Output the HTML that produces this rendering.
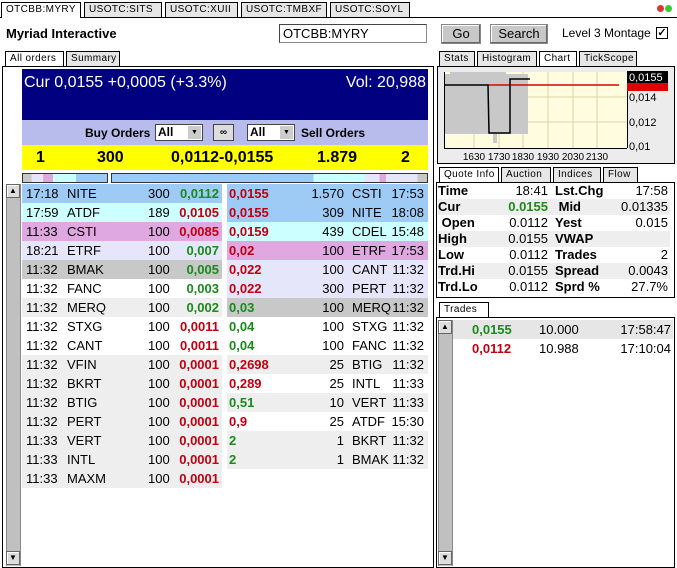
<!DOCTYPE html>
<html><head><meta charset="utf-8"><style>
*{box-sizing:border-box;margin:0;padding:0}
body{width:677px;height:566px;overflow:hidden;background:#fff;font-family:"Liberation Sans",Arial,sans-serif;font-size:13px;color:#000;position:relative}
.a{position:absolute}
.tab{position:absolute;height:15px;font-size:10px;letter-spacing:.4px;line-height:14px;padding-left:4px;border:1px solid #000;border-bottom:none;background:#e6e6e6;white-space:nowrap;overflow:hidden}
.tab.sel{background:#fff}
.btn{position:absolute;background:#c8c8c8;border:1px solid #888;box-shadow:inset -1px -1px #666,inset 1px 1px #fff;text-align:center;font-size:13px;line-height:18px}
.row{position:absolute;height:19px;line-height:19px;font-size:13px}
.row span{position:absolute;top:0}
.g{color:#1a8a1a;font-weight:bold}
.r{color:#c00010;font-weight:bold}
.sb{position:absolute;background:#c0c0c0;border-left:1px solid #888;border-right:1px solid #888}
.arr{position:absolute;width:14px;height:14px;background:#ddd;border:1px solid #666;box-shadow:inset 1px 1px #fff}
.q{position:absolute;left:438px;width:232px;height:16px;line-height:16px;font-size:13px}
.q span{position:absolute;top:0}
.q b{position:absolute;top:0}
</style></head><body>
<div class="a" style="left:0;top:17px;width:677px;height:1px;background:#000"></div>
<div class="tab sel" style="left:1px;top:2px;width:80px;height:16px">OTCBB:MYRY</div>
<div class="tab" style="left:84px;top:2px;width:78px">USOTC:SITS</div>
<div class="tab" style="left:165px;top:2px;width:73px">USOTC:XUII</div>
<div class="tab" style="left:241px;top:2px;width:86px">USOTC:TMBXF</div>
<div class="tab" style="left:330px;top:2px;width:80px">USOTC:SOYL</div>
<div class="a" style="left:657px;top:5px;width:7px;height:7px;border-radius:50%;background:#d33"></div>
<div class="a" style="left:665px;top:5px;width:7px;height:7px;border-radius:50%;background:#3c3"></div>
<div class="a" style="left:6px;top:26px;font-weight:bold;font-size:13px">Myriad Interactive</div>
<div class="a" style="left:279px;top:24px;width:148px;height:19px;border:1px solid #888;border-top-color:#444;border-left-color:#444;font-size:13px;line-height:17px;padding-left:3px">OTCBB:MYRY</div>
<div class="btn" style="left:441px;top:24px;width:40px;height:20px">Go</div>
<div class="btn" style="left:490px;top:24px;width:58px;height:20px">Search</div>
<div class="a" style="left:562px;top:26px;font-size:12px">Level 3 Montage</div>
<div class="a" style="left:656px;top:27px;width:12px;height:12px;border:1px solid #000;font-size:11px;line-height:10px;text-align:center;font-weight:bold">✓</div>
<div class="tab sel" style="left:5px;top:51px;width:59px;height:15px">All orders</div>
<div class="tab" style="left:66px;top:51px;width:54px">Summary</div>
<div class="a" style="left:2px;top:66px;width:432px;height:502px;border:1px solid #000"></div>
<div class="a" style="left:22px;top:69px;width:406px;height:51px;background:#000080;color:#fff;font-size:16px">
<div class="a" style="left:2px;top:5px">Cur 0,0155 +0,0005 (+3.3%)</div>
<div class="a" style="right:2px;top:5px">Vol: 20,988</div></div>
<div class="a" style="left:22px;top:120px;width:406px;height:25px;background:#b8bcec;font-weight:bold;font-size:12px">
<div class="a" style="left:63px;top:6px">Buy Orders</div>
<div class="a" style="left:133px;top:4px;width:48px;height:17px;background:#fff;border:1px solid #444;font-size:12px;padding-left:2px;line-height:15px">All<span style="position:absolute;right:1px;top:1px;width:13px;height:13px;background:#ccc;font-size:7px;text-align:center;line-height:13px">▼</span></div>
<div class="a" style="left:191px;top:4px;width:21px;height:17px;background:#ddd;border:1px solid #444;font-size:10px;text-align:center;line-height:15px">∞</div>
<div class="a" style="left:225px;top:4px;width:48px;height:17px;background:#fff;border:1px solid #444;font-size:12px;padding-left:2px;line-height:15px">All<span style="position:absolute;right:1px;top:1px;width:13px;height:13px;background:#ccc;font-size:7px;text-align:center;line-height:13px">▼</span></div>
<div class="a" style="left:279px;top:6px">Sell Orders</div></div>
<div class="a" style="left:22px;top:145px;width:406px;height:25px;background:#ffff00;font-weight:bold;font-size:16px;line-height:25px">
<span class="a" style="left:14px">1</span><span class="a" style="left:75px">300</span><span class="a" style="left:149px">0,0112-0,0155</span><span class="a" style="left:295px">1.879</span><span class="a" style="left:379px">2</span></div>
<div class="a" style="left:22px;top:173px;width:86px;height:10px;border:1px solid #333;background:linear-gradient(90deg,#c8c8c8 0 10%,#e6e6fa 10% 24%,#e0a8e0 24% 36%,#ccffff 36% 63%,#9ecbf5 63%)"></div>
<div class="a" style="left:111px;top:173px;width:317px;height:10px;border:1px solid #333;background:linear-gradient(90deg,#9ecbf5 0 64%,#ccffff 64% 80%,#e6e6fa 80% 85%,#e0a8e0 85% 87%,#e6e6fa 87% 97%,#c8c8c8 97%)"></div>
<div class="sb" style="left:6px;top:184px;width:15px;height:382px"></div>
<div class="arr" style="left:6px;top:184px;font-size:8px;text-align:center;line-height:12px">▲</div>
<div class="arr" style="left:6px;top:551px;font-size:8px;text-align:center;line-height:12px">▼</div>
<div id="rows"></div>
<div class="tab" style="left:439px;top:51px;width:36px">Stats</div>
<div class="tab" style="left:477px;top:51px;width:60px">Histogram</div>
<div class="tab sel" style="left:539px;top:51px;width:38px;height:15px">Chart</div>
<div class="tab" style="left:579px;top:51px;width:58px">TickScope</div>
<div class="a" style="left:437px;top:66px;width:238px;height:98px;border:1px solid #000;background:#ececec"></div>
<svg class="a" style="left:437px;top:66px" width="238" height="98">
<rect x="7" y="6" width="183" height="76" fill="#fffce0"/>
<g stroke="#d8d4a8" stroke-width="1">
<line x1="37" y1="6" x2="37" y2="82"/><line x1="62" y1="6" x2="62" y2="82"/><line x1="86" y1="6" x2="86" y2="82"/><line x1="111" y1="6" x2="111" y2="82"/><line x1="136" y1="6" x2="136" y2="82"/><line x1="160" y1="6" x2="160" y2="82"/>
<line x1="7" y1="31" x2="190" y2="31"/><line x1="7" y1="56" x2="190" y2="56"/></g>
<rect x="7" y="8" width="84" height="60" fill="#c8c8c8"/>
<rect x="13" y="6" width="56" height="4" fill="#c8c8c8"/>
<rect x="56" y="68" width="4" height="9" fill="#c8c8c8"/>
<line x1="50" y1="19" x2="182" y2="19" stroke="#e00000" stroke-width="1.5"/>
<polyline points="7,19 51,19 52,67 73,67 73,13 93,13" fill="none" stroke="#000" stroke-width="1.5"/>
<line x1="7.5" y1="6" x2="7.5" y2="82" stroke="#000"/><line x1="7" y1="82.5" x2="190" y2="82.5" stroke="#000"/><line x1="190.5" y1="6" x2="190.5" y2="82" stroke="#000"/>
<rect x="190" y="5" width="41" height="12" fill="#000"/><rect x="190" y="17" width="41" height="8" fill="#e00000"/>
<g font-family="Liberation Sans" font-size="11">
<text x="192" y="15" fill="#fff">0,0155</text>
<text x="192" y="35">0,014</text><text x="192" y="60">0,012</text><text x="192" y="84">0,01</text></g>
<g font-family="Liberation Sans" font-size="10" text-anchor="middle">
<text x="37" y="94">1630</text><text x="62" y="94">1730</text><text x="86" y="94">1830</text><text x="111" y="94">1930</text><text x="136" y="94">2030</text><text x="160" y="94">2130</text></g>
</svg>
<div class="tab sel" style="left:439px;top:167px;width:60px;height:15px">Quote Info</div>
<div class="tab" style="left:501px;top:167px;width:50px">Auction</div>
<div class="tab" style="left:553px;top:167px;width:48px">Indices</div>
<div class="tab" style="left:603px;top:167px;width:35px">Flow</div>
<div class="a" style="left:436px;top:182px;width:239px;height:116px;border:1px solid #000"></div>
<div id="quote"></div>
<div class="tab sel" style="left:439px;top:302px;width:50px;height:15px">Trades</div>
<div class="a" style="left:436px;top:317px;width:239px;height:251px;border:1px solid #000"></div>
<div class="sb" style="left:438px;top:320px;width:15px;height:246px"></div>
<div class="arr" style="left:438px;top:320px;font-size:8px;text-align:center;line-height:12px">▲</div>
<div class="arr" style="left:438px;top:551px;font-size:8px;text-align:center;line-height:12px">▼</div>
<div class="row" style="left:453px;top:320px;width:220px;background:#e6e6e6"><span class="g" style="left:19px">0,0155</span><span style="left:86px">10.000</span><span style="right:2px">17:58:47</span></div>
<div class="row" style="left:453px;top:339px;width:220px"><span class="r" style="left:19px">0,0112</span><span style="left:86px">10.988</span><span style="right:2px">17:10:04</span></div>
<script>
var B=[["17:18","NITE","300","0,0112","g","#9ecbf5"],["17:59","ATDF","189","0,0105","r","#ccffff"],["11:33","CSTI","100","0,0085","r","#e0a8e0"],["18:21","ETRF","100","0,007","g","#e6e6fa"],["11:32","BMAK","100","0,005","g","#c8c8c8"],["11:32","FANC","100","0,003","g","#fff"],["11:32","MERQ","100","0,002","g","#eee"],["11:32","STXG","100","0,0011","r","#fff"],["11:32","CANT","100","0,0011","r","#fff"],["11:32","VFIN","100","0,0001","r","#eee"],["11:32","BKRT","100","0,0001","r","#eee"],["11:32","BTIG","100","0,0001","r","#eee"],["11:32","PERT","100","0,0001","r","#eee"],["11:33","VERT","100","0,0001","r","#eee"],["11:33","INTL","100","0,0001","r","#eee"],["11:33","MAXM","100","0,0001","r","#eee"]];
var S=[["0,0155","r","1.570","CSTI","17:53","#9ecbf5"],["0,0155","r","309","NITE","18:08","#9ecbf5"],["0,0159","r","439","CDEL","15:48","#ccffff"],["0,02","r","100","ETRF","17:53","#e0a8e0"],["0,022","r","100","CANT","11:32","#e6e6fa"],["0,022","r","300","PERT","11:32","#e6e6fa"],["0,03","g","100","MERQ","11:32","#c8c8c8"],["0,04","g","100","STXG","11:32","#fff"],["0,04","g","100","FANC","11:32","#fff"],["0,2698","r","25","BTIG","11:32","#eee"],["0,289","r","25","INTL","11:33","#fff"],["0,51","g","10","VERT","11:33","#eee"],["0,9","r","25","ATDF","15:30","#fff"],["2","g","1","BKRT","11:32","#eee"],["2","g","1","BMAK","11:32","#eee"]];
var h="";
B.forEach(function(r,i){var y=184+i*19;h+='<div class="row" style="left:22px;top:'+y+'px;width:200px;background:'+r[5]+'"><span style="left:4px">'+r[0]+'</span><span style="left:45px">'+r[1]+'</span><span style="left:126px">'+r[2]+'</span><span class="'+r[4]+'" style="right:3px">'+r[3]+'</span></div>';});
S.forEach(function(r,i){var y=184+i*19;h+='<div class="row" style="left:227px;top:'+y+'px;width:201px;background:'+r[5]+'"><span class="'+r[1]+'" style="left:2px">'+r[0]+'</span><span style="right:84px">'+r[2]+'</span><span style="left:125px">'+r[3]+'</span><span style="right:4px">'+r[4]+'</span></div>';});
document.getElementById("rows").innerHTML=h;
var Q=[["Time","18:41","Lst.Chg","17:58",""],["Cur","<span class=g style='position:static'>0.0155</span>","&nbsp;Mid","0.01335","#eee"],["&nbsp;Open","0.0112","Yest","0.015",""],["High","0.0155","VWAP","","#eee"],["Low","0.0112","Trades","2",""],["Trd.Hi","0.0155","Spread","0.0043","#eee"],["Trd.Lo","0.0112","Sprd %","27.7%",""]];
h="";
Q.forEach(function(r,i){var y=183+i*16;h+='<div class="q" style="top:'+y+'px;background:'+(r[4]||'#fff')+'"><b style="left:0">'+r[0]+'</b><span style="right:122px">'+r[1]+'</span><b style="left:117px">'+r[2]+'</b><span style="right:2px">'+r[3]+'</span></div>';});
document.getElementById("quote").innerHTML=h;
</script>
</body></html>
